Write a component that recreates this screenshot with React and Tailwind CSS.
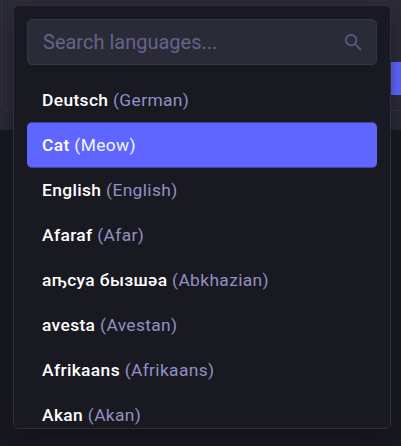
import { useState } from 'react';
import { MdSearch } from 'react-icons/md';

const LANGUAGES = [
    { code: 'de', native: 'Deutsch', name: 'German' },
    { code: 'cat', native: 'Cat', name: 'Meow' },
    { code: 'en', native: 'English', name: 'English' },
    { code: 'aa', native: 'Afaraf', name: 'Afar' },
    { code: 'ab', native: 'аҧсуа бызшәа', name: 'Abkhazian' },
    { code: 'ae', native: 'avesta', name: 'Avestan' },
    { code: 'af', native: 'Afrikaans', name: 'Afrikaans' },
    { code: 'ak', native: 'Akan', name: 'Akan' },
];

const LanguageOption = ({ language, isSelected, onSelect }) => (
    <li
        onClick={() => onSelect(language.code)}
        className={`h-[46px] -mb-px shrink-0 flex items-center px-[15px] pt-px rounded-[5px] border-y text-[17.4px] tracking-[0.36px] whitespace-pre cursor-pointer ${
            isSelected ? 'border-[#4145a0] bg-[#5f66ff] text-[#f4f4ff]' : 'border-transparent text-[#9290c3]'
        }`}
    >
        <span className="font-medium text-white">{language.native} </span>
        <span>({language.name})</span>
    </li>
);

const LanguagePicker = () => {
    const [selected, setSelected] = useState('cat');
    const [query, setQuery] = useState('');

    const visible = LANGUAGES.filter((language) =>
        `${language.native} ${language.name}`.toLowerCase().includes(query.toLowerCase())
    );

    return (
        <div className="absolute left-[13px] top-[5px] w-[378px] h-[424px] flex flex-col px-[13px] pt-[13px] rounded-[5px] border border-[#2f2d42] bg-[#191921] shadow-[0_10px_20px_-6px_rgba(15,15,16,0.8)] overflow-hidden">
            <div className="h-[46px] shrink-0 flex items-center pl-[15px] pr-[11px] rounded-[5px] border border-[#34334a] bg-[#2b2a37]">
                <input
                    value={query}
                    onChange={(e) => setQuery(e.target.value)}
                    placeholder="Search languages..."
                    className="flex-1 min-w-0 text-[20px] bg-transparent outline-none text-white placeholder:text-[#64638c]"
                />
                <MdSearch className="size-[23px] text-[#59577d]" />
            </div>
            <ul className="mt-3 flex flex-col">
                {visible.map((language) => (
                    <LanguageOption
                        key={language.code}
                        language={language}
                        isSelected={language.code === selected}
                        onSelect={setSelected}
                    />
                ))}
            </ul>
        </div>
    );
};

const App = () => (
    <div className="relative h-[446px] overflow-hidden bg-[#181820] font-['Roboto','Noto_Sans',sans-serif]">
        <div className="h-[130px] pl-px bg-[#252a33]">
            <div className="h-[111px] flex items-start justify-end pt-[62px] rounded-bl-[5px] border-l border-b border-[#343349] bg-[#2b2a37]">
                <button className="w-24 h-[33px] bg-[#5f66ff]" />
            </div>
        </div>
        <LanguagePicker />
    </div>
);

export default App;
